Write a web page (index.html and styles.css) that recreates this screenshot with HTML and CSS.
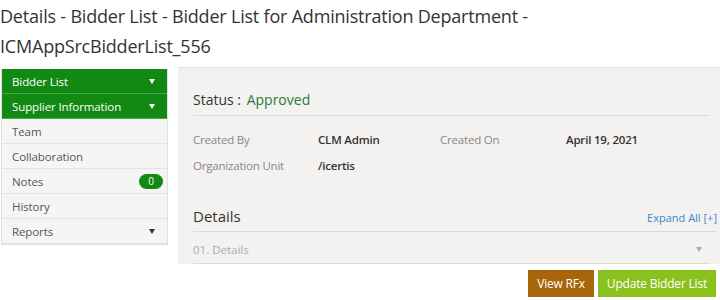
FILE: index.html
```html
<!DOCTYPE html>
<html>
<head>
<meta charset="utf-8">
<link rel="stylesheet" href="styles.css">
</head>
<body>
<h1 class="title">Details - Bidder List - Bidder List for Administration Department -<br>ICMAppSrcBidderList_556</h1>
<div class="layout">
  <nav class="side">
    <div class="item active">Bidder List <span class="caret white"></span></div>
    <div class="item active">Supplier Information <span class="caret white"></span></div>
    <div class="item">Team</div>
    <div class="item">Collaboration</div>
    <div class="item">Notes <span class="badge">0</span></div>
    <div class="item">History</div>
    <div class="item">Reports <span class="caret dark"></span></div>
  </nav>
  <div class="right">
    <main class="panel">
      <div class="status"><span class="status-label">Status :</span> <span class="status-val">Approved</span></div>
      <div class="grid">
        <span class="lbl">Created By</span><span class="val">CLM Admin</span><span class="lbl">Created On</span><span class="val">April 19, 2021</span>
        <span class="lbl">Organization Unit</span><span class="val">/icertis</span><span></span><span></span>
      </div>
      <div class="details-head"><span class="details-title">Details</span><a class="expand">Expand All [+]</a></div>
      <div class="section"><span>01. Details</span><span class="caret grey"></span></div>
    </main>
    <div class="actions">
      <button class="btn brown">View RFx</button>
      <button class="btn lime">Update Bidder List</button>
    </div>
  </div>
</div>
</body>
</html>
```
FILE: styles.css
```css
html, body { margin: 0; padding: 0; background: #fff; }
body { font-family: "Open Sans", "Noto Sans", sans-serif; color: #333; width: 720px; height: 300px; overflow: hidden; }
.title { margin: 0; padding: 1px 0 0 0; font-weight: 400; font-size: 18px; line-height: 30px; color: #333; letter-spacing: -0.2px; }
.layout { display: flex; gap: 10px; margin-top: 6px; }
.side { width: 165px; margin-left: 1px; margin-top: 2px; border: 1px solid #e0e0e0; border-top: none; align-self: flex-start; }
.item { height: 25px; box-sizing: border-box; padding: 0 10px; display: flex; align-items: center; justify-content: space-between; font-size: 11.5px; color: #555; background: #f5f5f5; border-bottom: 1px solid #e3e3e3; letter-spacing: -0.1px; }
.item.active { background: #128912; color: #fff; border-bottom: 1px solid #4aa64a; }
.caret { width: 0; height: 0; border-left: 3.5px solid transparent; border-right: 3.5px solid transparent; border-top: 5px solid #fff; margin-right: 2px; }
.caret.dark { border-top-color: #333; }
.caret.grey { border-top-color: #aaa; }
.badge { background: #128912; color: #fff; font-size: 10px; border-radius: 8px; width: 24px; height: 15px; display: flex; align-items: center; justify-content: center; margin-right: -6px; }
.right { flex: 1; display: flex; flex-direction: column; }
.panel { background: #f3f2f1; border-top: 1px solid #e2e2e2; padding: 0 10px 0 15px; height: 197px; box-sizing: border-box; }
.status { margin-top: 22px; padding-bottom: 6px; border-bottom: 1px solid #dcdcdc; font-size: 14px; }
.status-label { color: #333; }
.status-val { color: #2a7a3a; margin-left: 2px; }
.grid { display: grid; grid-template-columns: 125px 122px 126px 1fr; row-gap: 8px; margin-top: 15px; font-size: 11.5px; line-height: 18px; letter-spacing: -0.2px; }
.lbl { color: #888; }
.val { color: #333; font-weight: 600; }
.details-head { display: flex; justify-content: space-between; align-items: flex-end; margin-top: 31px; padding-bottom: 5px; border-bottom: 1px solid #dcdcdc; margin-right: -7px; }
.details-title { font-size: 15px; color: #333; }
.expand { font-size: 11px; color: #3a86cf; padding-bottom: 1px; }
.section { display: flex; justify-content: space-between; align-items: center; height: 32px; border-bottom: 1px solid #dcdcdc; font-size: 11.5px; color: #aaa; padding-right: 6px; padding-top: 3px; box-sizing: border-box; }
.actions { display: flex; justify-content: flex-end; gap: 4px; margin-top: 6px; margin-right: 4px; }
.btn { border: none; height: 27px; padding: 0 9px; font-family: inherit; font-size: 12px; color: #fff; letter-spacing: -0.2px; }
.btn.brown { background: #a8650a; }
.btn.lime { background: #8bc11c; }
```
